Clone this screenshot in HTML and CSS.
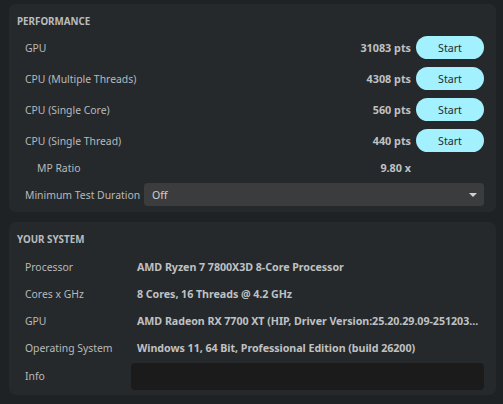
FILE: index.html
```html
<!DOCTYPE html>
<html>
<head>
<meta charset="utf-8">
<link rel="stylesheet" href="styles.css">
</head>
<body>
<section class="panel perf">
  <h2 class="head">PERFORMANCE</h2>
  <div class="bench">
    <span class="label">GPU</span>
    <span class="score">31083 pts</span>
    <button class="start">Start</button>
  </div>
  <div class="bench">
    <span class="label">CPU (Multiple Threads)</span>
    <span class="score">4308 pts</span>
    <button class="start">Start</button>
  </div>
  <div class="bench">
    <span class="label">CPU (Single Core)</span>
    <span class="score">560 pts</span>
    <button class="start">Start</button>
  </div>
  <div class="bench">
    <span class="label">CPU (Single Thread)</span>
    <span class="score">440 pts</span>
    <button class="start">Start</button>
  </div>
  <div class="bench ratio">
    <span class="label sub">MP Ratio</span>
    <span class="score">9.80 x</span>
    <span class="spacer"></span>
  </div>
  <div class="duration">
    <span class="label">Minimum Test Duration</span>
    <div class="select">
      <span>Off</span>
      <span class="arrow"></span>
    </div>
  </div>
</section>
<section class="panel sys">
  <h2 class="head">YOUR SYSTEM</h2>
  <div class="grid">
    <span class="label">Processor</span>
    <span class="value">AMD Ryzen 7 7800X3D 8-Core Processor</span>
    <span class="label">Cores x GHz</span>
    <span class="value">8 Cores, 16 Threads @ 4.2 GHz</span>
    <span class="label">GPU</span>
    <span class="value">AMD Radeon RX 7700 XT (HIP, Driver Version:25.20.29.09-251203...</span>
    <span class="label">Operating System</span>
    <span class="value">Windows 11, 64 Bit, Professional Edition (build 26200)</span>
    <span class="label info-label">Info</span>
    <div class="info"></div>
  </div>
</section>
</body>
</html>
```
FILE: styles.css
```css
* { box-sizing: border-box; }
html, body { margin: 0; }
body {
  background: #1f2224;
  width: 503px;
  height: 404px;
  padding: 4px 7px 0 9px;
  font-family: "Noto Sans", "Open Sans", sans-serif;
  font-size: 11px;
  color: #b7babc;
  overflow: hidden;
}
.panel {
  background: #26292b;
  border-radius: 7px;
  padding: 10px 12px 6px 8px;
}
.sys {
  margin-top: 10px;
  padding-bottom: 7px;
}
.head {
  margin: 0;
  height: 16px;
  line-height: 16px;
  font-size: 9.8px;
  font-weight: 700;
  color: #b9bcbe;
}
.perf .head { margin-bottom: 6px; }
.sys .head { margin-bottom: 5px; }
.label {
  font-size: 10.4px;
  white-space: nowrap;
}
.bench {
  display: flex;
  align-items: center;
  height: 23px;
  margin-bottom: 8px;
  padding-left: 8px;
}
.bench .label { flex: 1; }
.label.sub { padding-left: 12px; }
.score {
  font-weight: 700;
  color: #bfc1c3;
  margin-right: 5px;
  font-size: 10.8px;
}
.start {
  width: 68px;
  height: 23px;
  border: 0;
  border-radius: 12px;
  background: #a3f1ff;
  color: #1d2b30;
  font-family: inherit;
  font-size: 10.6px;
  padding: 0;
}
.spacer { width: 68px; }
.ratio { height: 15px; }
.duration {
  display: flex;
  align-items: center;
  padding-left: 8px;
  height: 23px;
}
.duration .label { width: 119px; }
.select {
  flex: 1;
  height: 23px;
  border-radius: 4px;
  background: #3b3c3d;
  display: flex;
  align-items: center;
  justify-content: space-between;
  padding: 0 7px 0 8px;
  color: #cfd1d2;
  font-size: 10.6px;
}
.arrow {
  width: 0;
  height: 0;
  border-left: 4px solid transparent;
  border-right: 4px solid transparent;
  border-top: 4px solid #cfd0d1;
}
.grid {
  display: grid;
  grid-template-columns: 106px 1fr;
  grid-auto-rows: 27px;
  align-items: center;
  padding-left: 8px;
}
.value {
  font-weight: 700;
  font-size: 10.7px;
  letter-spacing: -0.05px;
  color: #bfc1c3;
  padding-left: 6px;
  white-space: nowrap;
  overflow: hidden;
  text-overflow: ellipsis;
}
.info-label { margin-top: 2px; align-self: center; }
.info {
  height: 27px;
  margin-top: 2px;
  background: #1b1b1b;
  border-radius: 4px;
  align-self: start;
}
```
